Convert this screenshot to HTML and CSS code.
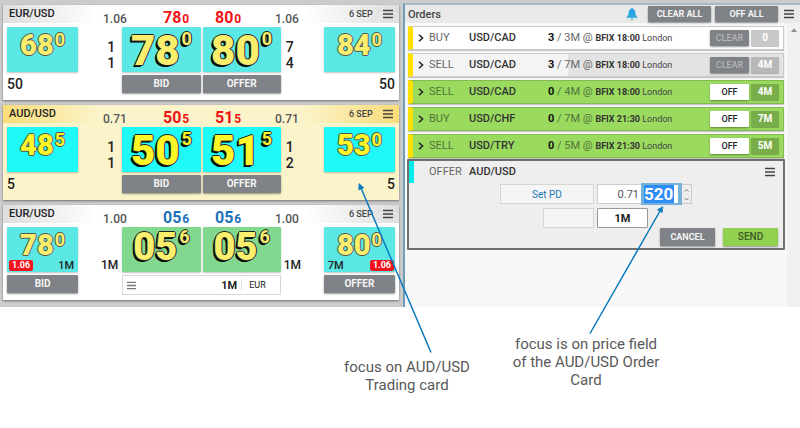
FILE: index.html
```html
<!DOCTYPE html>
<html lang="en">
<head>
<meta charset="utf-8">
<title>Trading cards and orders</title>
<link rel="stylesheet" href="styles.css">
</head>
<body>
<svg class="defs" width="0" height="0" aria-hidden="true">
  <symbol id="menu" viewBox="0 0 10 10"><path d="M0 1.5h10M0 5h10M0 8.5h10" stroke="currentColor" stroke-width="1.4"/></symbol>
  <symbol id="chevron" viewBox="0 0 6 8"><path d="M1 .7L4.6 4L1 7.3" fill="none" stroke="currentColor" stroke-width="1.5"/></symbol>
</svg>
<main class="app">
  <section class="cards" aria-label="Trading cards">
    <article class="card">
      <header class="card-head">
        <h2>EUR/USD</h2><span class="base">1.06</span><span class="ref">78<small>0</small></span><span class="ref">80<small>0</small></span><span class="base">1.06</span>
        <div class="card-date"><span>6 SEP</span><button class="icon" aria-label="Menu"><svg><use href="#menu"/></svg></button></div>
      </header>
      <div class="card-body">
        <div class="tile side"><b>68</b><sup>0</sup></div>
        <div class="depth left"><span>1</span><span>1</span></div>
        <div class="tile main bid"><b>78</b><sup>0</sup></div>
        <div class="tile main offer"><b>80</b><sup>0</sup></div>
        <div class="depth"><span>7</span><span>4</span></div>
        <div class="tile side"><b>84</b><sup>0</sup></div>
        <span class="amount">50</span>
        <button class="btn bid">BID</button><button class="btn offer">OFFER</button>
        <span class="amount last">50</span>
      </div>
    </article>
    <article class="card focused">
      <header class="card-head">
        <h2>AUD/USD</h2><span class="base">0.71</span><span class="ref">50<small>5</small></span><span class="ref">51<small>5</small></span><span class="base">0.71</span>
        <div class="card-date"><span>6 SEP</span><button class="icon" aria-label="Menu"><svg><use href="#menu"/></svg></button></div>
      </header>
      <div class="card-body">
        <div class="tile side"><b>48</b><sup>5</sup></div>
        <div class="depth left"><span>1</span><span>1</span></div>
        <div class="tile main bid"><b>50</b><sup>5</sup></div>
        <div class="tile main offer"><b>51</b><sup>5</sup></div>
        <div class="depth"><span>1</span><span>2</span></div>
        <div class="tile side"><b>53</b><sup>0</sup></div>
        <span class="amount">5</span>
        <button class="btn bid">BID</button><button class="btn offer">OFFER</button>
        <span class="amount last">5</span>
      </div>
    </article>
    <article class="card passive">
      <header class="card-head">
        <h2>EUR/USD</h2><span class="base">1.00</span><span class="ref">05<small>6</small></span><span class="ref">05<small>6</small></span><span class="base">1.00</span>
        <div class="card-date"><span>6 SEP</span><button class="icon" aria-label="Menu"><svg><use href="#menu"/></svg></button></div>
      </header>
      <div class="card-body">
        <div class="tile side"><b>78</b><sup>0</sup><div class="tile-foot"><em>1.06</em><span>1M</span></div></div>
        <div class="depth left"><span>1M</span></div>
        <div class="tile main bid"><b>05</b><sup>6</sup></div>
        <div class="tile main offer"><b>05</b><sup>6</sup></div>
        <div class="depth"><span>1M</span></div>
        <div class="tile side"><b>80</b><sup>0</sup><div class="tile-foot"><span>7M</span><em>1.06</em></div></div>
        <button class="btn">BID</button>
        <div class="ticket"><button class="icon" aria-label="Amounts"><svg><use href="#menu"/></svg></button><input aria-label="Amount" value="1M"><span>EUR</span></div>
        <button class="btn last">OFFER</button>
      </div>
    </article>
  </section>

  <section class="orders" aria-label="Orders">
    <header class="orders-head">
      <h1>Orders</h1>
      <svg class="bell" viewBox="0 0 12 12" aria-hidden="true"><path d="M6 0a1 1 0 0 0-1 1C3.200 1.500 2.600 3 2.600 4.600c0 2.600-.7 3.400-2 4.400v.8h10.800V9c-1.300-1-2-1.800-2-4.400C9.400 3 8.800 1.500 7 1a1 1 0 0 0-1-1zM4.600 10.500a1.400 1.300 0 0 0 2.800 0z" fill="#27a5e0"/></svg>
      <button class="btn">CLEAR ALL</button><button class="btn">OFF ALL</button>
      <button class="icon" aria-label="Orders menu"><svg><use href="#menu"/></svg></button>
    </header>
    <div class="orders-body">
      <div class="orders-main">
        <ul class="order-list">
          <li class="order idle"><svg class="chevron"><use href="#chevron"/></svg><span class="verb">BUY</span><b class="pair">USD/CAD</b><span class="detail"><b>3</b> / 3M @ <small><b>BFIX 18:00</b> London</small></span><button class="btn clear">CLEAR</button><span class="chip">0</span></li>
          <li class="order partial"><svg class="chevron"><use href="#chevron"/></svg><span class="verb">SELL</span><b class="pair">USD/CAD</b><span class="detail"><b>3</b> / 7M @ <small><b>BFIX 18:00</b> London</small></span><button class="btn clear">CLEAR</button><span class="chip">4M</span></li>
          <li class="order live"><svg class="chevron"><use href="#chevron"/></svg><span class="verb">SELL</span><b class="pair">USD/CAD</b><span class="detail"><b>0</b> / 4M @ <small><b>BFIX 18:00</b> London</small></span><button class="btn off">OFF</button><span class="chip">4M</span></li>
          <li class="order live"><svg class="chevron"><use href="#chevron"/></svg><span class="verb">BUY</span><b class="pair">USD/CHF</b><span class="detail"><b>0</b> / 7M @ <small><b>BFIX 21:30</b> London</small></span><button class="btn off">OFF</button><span class="chip">7M</span></li>
          <li class="order live"><svg class="chevron"><use href="#chevron"/></svg><span class="verb">SELL</span><b class="pair">USD/TRY</b><span class="detail"><b>0</b> / 5M @ <small><b>BFIX 21:30</b> London</small></span><button class="btn off">OFF</button><span class="chip">5M</span></li>
        </ul>
        <form class="entry">
          <div class="entry-head"><span class="verb">OFFER</span><b class="pair">AUD/USD</b><button type="button" class="icon" aria-label="Order menu"><svg><use href="#menu"/></svg></button></div>
          <div class="fields">
            <button type="button" class="set">Set PD</button>
            <div class="price"><span>0.71</span><input aria-label="Price" value="520">
              <svg class="spin" viewBox="0 0 8 18" aria-hidden="true"><path d="M2 6.500L4 4.500L6 6.500M2 13L4 15L6 13" fill="none" stroke="#777"/></svg></div>
            <input class="blank" aria-label="Minimum">
            <input class="size" aria-label="Size" value="1M">
          </div>
          <div class="actions"><button type="button" class="btn">CANCEL</button><button type="button" class="btn send">SEND</button></div>
        </form>
      </div>
      <div class="scroll"><svg viewBox="0 0 6 4" aria-hidden="true"><path d="M0 4L3 0.500L6 4z" fill="#8b8b8b"/></svg></div>
    </div>
  </section>
</main>
<section class="notes">
  <p>focus on AUD/USD Trading card</p>
  <p>focus is on price field of the AUD/USD Order Card</p>
</section>
<svg class="arrows" viewBox="0 0 800 428" aria-hidden="true">
  <g stroke="#0a7abf" stroke-width="1.500" fill="#0a7abf">
    <path d="M431 352.500L361 188M590 333.500L660 211"/>
    <path d="M359 183.500L358.700 190L364 187.800z M662.800 206.500L657.300 209.800L662.300 212.700z" stroke-width=".6"/>
  </g>
</svg>
</body>
</html>
```

FILE: styles.css
```css
* { box-sizing: border-box; }
body { margin: 0; background: #fff; color: #222; font-family: Roboto, "Liberation Sans", sans-serif; font-size: 12px; position: relative; }
h1, h2, p, ul { margin: 0; padding: 0; }
button, input { font: inherit; color: inherit; padding: 0; margin: 0; border: 0; border-radius: 0; min-width: 0; }
.defs { position: absolute; }
.app { display: flex; background: #cbcbcb; }

.icon { background: none; color: #444; line-height: 0; flex: none; }
.icon svg { width: 10px; height: 10px; }
.btn { height: 18px; background: #7f8286; color: #f4f4f4; font-size: 10px; font-weight: 700; line-height: 18px; text-align: center; border-radius: 1px; box-shadow: 0 1px 2px rgba(0, 0, 0, .4); }

/* Trading cards */
.cards { flex: 403 1 403px; padding: 5px 4px 7px 3px; display: flex; flex-direction: column; gap: 5px; }
.card { padding: 0 4px 7px; box-shadow: 0 1px 2px rgba(0, 0, 0, .45);
  --edge: #dedede; --face: #fff; --tile: #5be8e5; --digit: #f9ef6c;
  background: linear-gradient(90deg, var(--edge), var(--face)) left top / 24% 18px no-repeat, linear-gradient(270deg, var(--edge), var(--face)) right top / 24% 18px no-repeat, var(--face); }
.focused { --edge: #fadc78; --face: #fbf4ca; --tile: #1ff9f7; --digit: #fff727; }
.card-head { display: grid; grid-template-columns: 96fr 60fr 52fr 60fr 74fr 46fr; height: 22px; }
.card-head > * { min-width: 0; }
.card-head h2 { font-size: 11px; font-weight: 500; line-height: 18px; padding-left: 2px; }
.base { color: #555; font-weight: 500; line-height: 29px; }
.ref { color: #f01414; font-size: 16px; font-weight: 700; line-height: 25px; }
.ref small { font-size: 12px; margin-left: 1px; }
.passive .ref { color: #1c72b8; }
.card-date { display: flex; justify-content: space-between; height: 18px; align-items: center; padding-right: 2px; font-size: 9px; font-weight: 500; color: #444; white-space: nowrap; }

.card-body { display: grid; grid-template-columns: 71fr 44fr 79fr 79fr 43fr 71fr; grid-template-rows: 45px 18px; row-gap: 3px; }
.card-body > .bid { margin-right: 1px; }
.card-body > .offer { margin-left: 1px; }
.card-body > .btn.bid { grid-column: 3; }
.tile { background: var(--tile); color: var(--digit); box-shadow: 0 1px 2px rgba(0, 0, 0, .25); border-radius: 1px; display: flex; flex-wrap: wrap; justify-content: center; align-content: flex-start; font-weight: 700;
  text-shadow: 1px 0 #555, -1px 0 #555, 0 1px #555, 0 -1px #555; }
.side { padding-top: 4px; }
.side b { font-size: 29px; line-height: 29px; }
.tile sup { font-size: 18px; line-height: 18px; margin-left: 1px; vertical-align: baseline; }
.main { padding-top: 3px; }
.main b { font-size: 42px; line-height: 42px; height: 40px; }
.main sup { margin-left: 2px; }
.main b, .main sup { text-shadow: 1px 0 #222, 0 1px #222, 0 -1px #222, -1px 0 #222, -1px 1px #111, -2px 2px #000; }
.passive .main { background: #82d78e; padding-top: 1px; }
.passive .main b { font-size: 38px; line-height: 38px; }
.depth { font-size: 14px; font-weight: 500; line-height: 16px; padding: 12px 0 0 5px; display: flex; flex-direction: column; }
.depth.left { padding: 12px 7px 0 0; align-items: flex-end; }
.passive .depth { font-size: 12px; justify-content: flex-end; line-height: 14px; padding: 0 0 0 3px; }
.passive .depth.left { padding: 0 4px 0 0; }
.amount { font-size: 14px; font-weight: 500; line-height: 18px; }
.amount.last, .btn.last { grid-column: 6; }
.amount.last { text-align: right; }
.tile-foot { flex: 0 0 100%; display: flex; justify-content: space-between; align-items: center; height: 11px; padding: 0 4px 0 2px; color: #222; font-size: 11px; font-weight: 500; line-height: 11px; text-shadow: none; }
.tile-foot span:first-child { padding-left: 2px; }
.tile-foot em:last-child { margin-right: -3px; }
.tile-foot em { background: #f5121a; color: #fff; font: 700 9px/11px Roboto, sans-serif; padding: 0 3px; border-radius: 2px; }
.ticket { grid-column: 3 / 5; display: flex; align-items: center; background: #fff; border: 1px solid #d4d6da; height: 20px; padding: 0 14px 0 4px; }
.ticket .icon { color: #777; }
.ticket .icon svg { width: 9px; height: 9px; }
.ticket input { flex: 1; width: 0; text-align: right; font-size: 11px; font-weight: 700; background: none; }
.ticket span { border-left: 1px solid #ddd; margin-left: 4px; padding-left: 7px; font-size: 9px; line-height: 12px; }

/* Orders panel */
.orders { flex: 397 1 397px; margin-top: 3px; border-left: 2px solid #709db5; border-top: 2px solid #a5bac6; background: #f8f8f8; display: flex; flex-direction: column; }
.orders-head { display: flex; align-items: center; gap: 4px; height: 18px; padding: 0 6px 0 3px; background: #e9e9e9; }
.orders-head h1 { flex: 1; font-size: 11px; font-weight: 500; color: #444; }
.orders-head .btn { width: 63px; height: 16px; line-height: 16px; font-size: 9px; }
.orders-head .icon { margin-left: 2px; }
.bell { width: 12px; height: 12px; margin-right: 6px; }
.orders-body { flex: 1; display: flex; }
.orders-main { flex: 1; padding: 3px 2px 0; }
.scroll { width: 13px; background: #f0f0f0; padding-top: 5px; text-align: center; line-height: 0; }
.scroll svg { width: 6px; height: 4px; }
.order-list { list-style: none; display: grid; gap: 3px; padding: 0 1px; }
.order { display: grid; grid-template-columns: 16px 40px 79px 1fr 39px 30px; align-items: center; height: 24px; border: 1px solid #c9c9c9; border-left: 5px solid #ffe000; padding-right: 4px; background: #fff; box-shadow: 0 1px 1px rgba(0, 0, 0, .2); color: #666; }
.partial { background: linear-gradient(90deg, #f4f4f4 42%, #e3e3e3 42%); }
.live { background: #9ada5e; border-color: #82b951; border-left-color: #ffe000; color: #52753a; }
.chevron { width: 6px; height: 8px; margin-left: 5px; color: #222; }
.verb, .pair { font-size: 11px; line-height: 22px; }
.pair { font-weight: 500; color: #333; }
.detail { white-space: nowrap; font-size: 11px; line-height: 22px; }
.detail > b { color: #111; }
.detail small { font-size: 9px; color: #444; }
.detail small b { color: #333; }
.order .btn { height: 16px; line-height: 16px; font-size: 9px; font-weight: 500; }
.order .clear { color: #b4b5b7; }
.order .off { background: #fff; color: #222; }
.chip { height: 16px; line-height: 16px; margin-left: 2px; text-align: center; font-size: 10px; font-weight: 700; color: #fff; background: #b8b8b8; border-radius: 1px; box-shadow: 0 1px 1px rgba(0, 0, 0, .25); }
.live .chip { background: #79ad49; }
.idle .chip { background: #c8c8c8; }

/* Order entry */
.entry { margin-top: 1px; border: 2px solid #6f6f6f; border-radius: 1px; background: #eee; padding-bottom: 2px; }
.entry-head { display: grid; grid-template-columns: 40px 1fr auto; align-items: center; height: 22px; border-left: 5px solid #00efea; padding: 0 8px 0 15px; color: #666; }
.fields { display: grid; grid-template-columns: 94px 95px; grid-auto-rows: 20px; gap: 4px 3px; padding: 1px 0 0 91px; }
.set, .blank { background: #f5f5f5; border: 1px solid #d5d5d5; }
.set { color: #2277b5; font-size: 10px; }
.blank, .size { width: 51px; }
.blank { justify-self: end; }
.size { background: #fff; border: 1px solid #999; border-radius: 1px; text-align: center; font-size: 11px; font-weight: 700; }
.price { display: flex; align-items: center; justify-content: flex-end; background: #fff; border: 1px solid #ccc; font-size: 11px; color: #555; }
.price input { width: 41px; height: 22px; margin-left: 2px; padding-left: 0; border: 2px solid #76b2d8; border-width: 2px 4px 2px 3px; background: linear-gradient(90deg, #2e8cf5 30px, #fff 30px); color: #fff; font-size: 17px; font-weight: 700; line-height: 18px; }
.spin { width: 9px; height: 18px; background: #eee; }
.actions { display: flex; justify-content: flex-end; gap: 8px; padding-right: 5px; }
.actions .btn { width: 55px; font-size: 9px; }
.actions .send { background: #92d050; color: #3b5c24; font-size: 10px; font-weight: 500; }

/* Callouts */
.notes { display: flex; gap: 36px; padding: 28px 0 36px 340px; color: #595959; font-size: 15px; line-height: 18px; text-align: center; }
.notes p { width: 134px; margin-top: 23px; }
.notes p + p { width: 152px; margin-top: 0; }
.arrows { position: absolute; left: 0; top: 0; width: 800px; height: 428px; pointer-events: none; }
```
